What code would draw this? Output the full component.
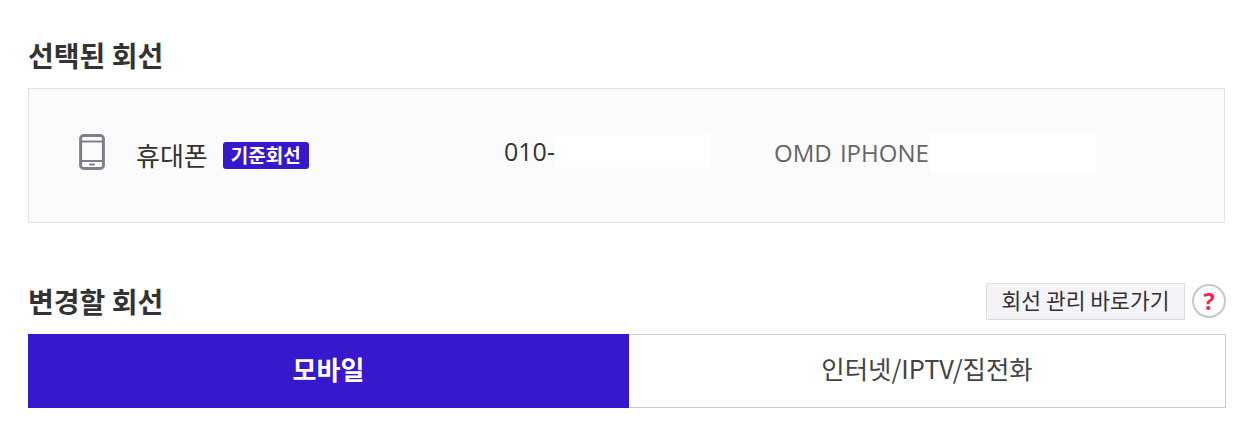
<div class="page">
  <h2 class="title first">선택된 회선</h2>
  <section class="line-box">
    <div class="col type">
      <svg class="phone" width="26" height="36" viewBox="0 0 26 36" fill="none" aria-hidden="true">
        <rect x="1.6" y="1.6" width="22.8" height="32.8" rx="3" stroke="#7f7e8c" stroke-width="3" />
        <path d="M2 7.5h22M2 27h22" stroke="#7f7e8c" stroke-width="2.2" />
        <rect x="10" y="29.5" width="6" height="2" rx="1" fill="#7f7e8c" />
      </svg>
      <span class="kind">휴대폰</span>
      <span class="badge">기준회선</span>
    </div>
    <div class="col number">
      <span>010-</span><span class="mask mask-num"></span>
    </div>
    <div class="col model">
      <span>OMD IPHONE</span><span class="mask mask-model"></span>
    </div>
  </section>

  <div class="head-row">
    <h2 class="title second">변경할 회선</h2>
    <div class="tools">
      <button class="link">회선 관리 바로가기</button>
      <span class="help">?</span>
    </div>
  </div>
  <div class="tabs">
    <button class="tab active"><span>모바일</span></button>
    <button class="tab"><span>인터넷/IPTV/집전화</span></button>
  </div>
</div>

<style>
  :global(body) {
    margin: 0;
    background: #fff;
  }
  .page {
    box-sizing: border-box;
    width: 1249px;
    height: 439px;
    padding: 37px 23px 0 28px;
    font-family: "Noto Sans CJK KR", "Noto Sans", sans-serif;
    color: #333;
    overflow: hidden;
  }
  .title {
    margin: 0;
    font-size: 28px;
    line-height: 36px;
    font-weight: 700;
    color: #333;
  }
  .first {
    margin-bottom: 15px;
  }
  .second {
    margin-top: -2px;
  }
  .line-box {
    box-sizing: border-box;
    width: 1197px;
    height: 135px;
    border: 1px solid #e2e2e2;
    background: #fbfbfb;
    display: flex;
    align-items: center;
    padding-left: 50px;
  }
  .col {
    display: flex;
    align-items: center;
  }
  .type {
    width: 425px;
  }
  .phone {
    margin-right: 31px;
    margin-top: -8px;
  }
  .kind {
    font-size: 26px;
    line-height: 34px;
    color: #333;
    margin-top: -1px;
  }
  .badge {
    margin-left: 15px;
    width: 86px;
    height: 27px;
    border-radius: 3px;
    background: #3718cc;
    color: #fff;
    font-size: 19px;
    font-weight: 700;
    line-height: 25px;
    text-align: center;
    margin-top: 0;
  }
  .number {
    width: 270px;
    font-family: "Open Sans", sans-serif;
    font-size: 25px;
    color: #333;
    margin-top: -10px;
  }
  .mask {
    display: block;
    background: #fff;
  }
  .mask-num {
    width: 156px;
    height: 32px;
  }
  .model {
    font-family: "Open Sans", sans-serif;
    font-size: 24px;
    word-spacing: 2px;
    color: #666;
    margin-top: -7px;
  }
  .mask-model {
    width: 166px;
    height: 41px;
    margin-left: 1px;
  }
  .head-row {
    margin-top: 53px;
    display: flex;
    justify-content: space-between;
    align-items: center;
    height: 51px;
  }
  .tools {
    display: flex;
    align-items: center;
    gap: 7px;
    margin-top: -1px;
    margin-left: -1px;
  }
  .link {
    box-sizing: border-box;
    width: 199px;
    height: 37px;
    padding: 0 0 4px;
    border: 1px solid #ddd;
    background: #f4f4f8;
    font: 400 21.5px "Noto Sans CJK KR", sans-serif;
    color: #333;
  }
  .help {
    box-sizing: border-box;
    width: 34px;
    height: 34px;
    border: 2px solid #c8c8c8;
    border-radius: 50%;
    color: #f0265c;
    font: 700 24px/30px "Noto Sans", sans-serif;
    text-align: center;
  }
  .tabs {
    display: flex;
    width: 1198px;
    height: 74px;
    margin-top: 7px;
  }
  .tab {
    box-sizing: border-box;
    flex: 1;
    padding: 0 0 6px;
    border: 1px solid #ccc;
    border-left: 0;
    background: #fff;
    font: 400 25.4px "Noto Sans CJK KR", sans-serif;
    color: #444;
  }
  .tab.active {
    flex: 0 0 601px;
    border: 0;
    background: #3718cc;
    color: #fff;
    font-size: 26px;
    font-weight: 700;
  }
</style>
